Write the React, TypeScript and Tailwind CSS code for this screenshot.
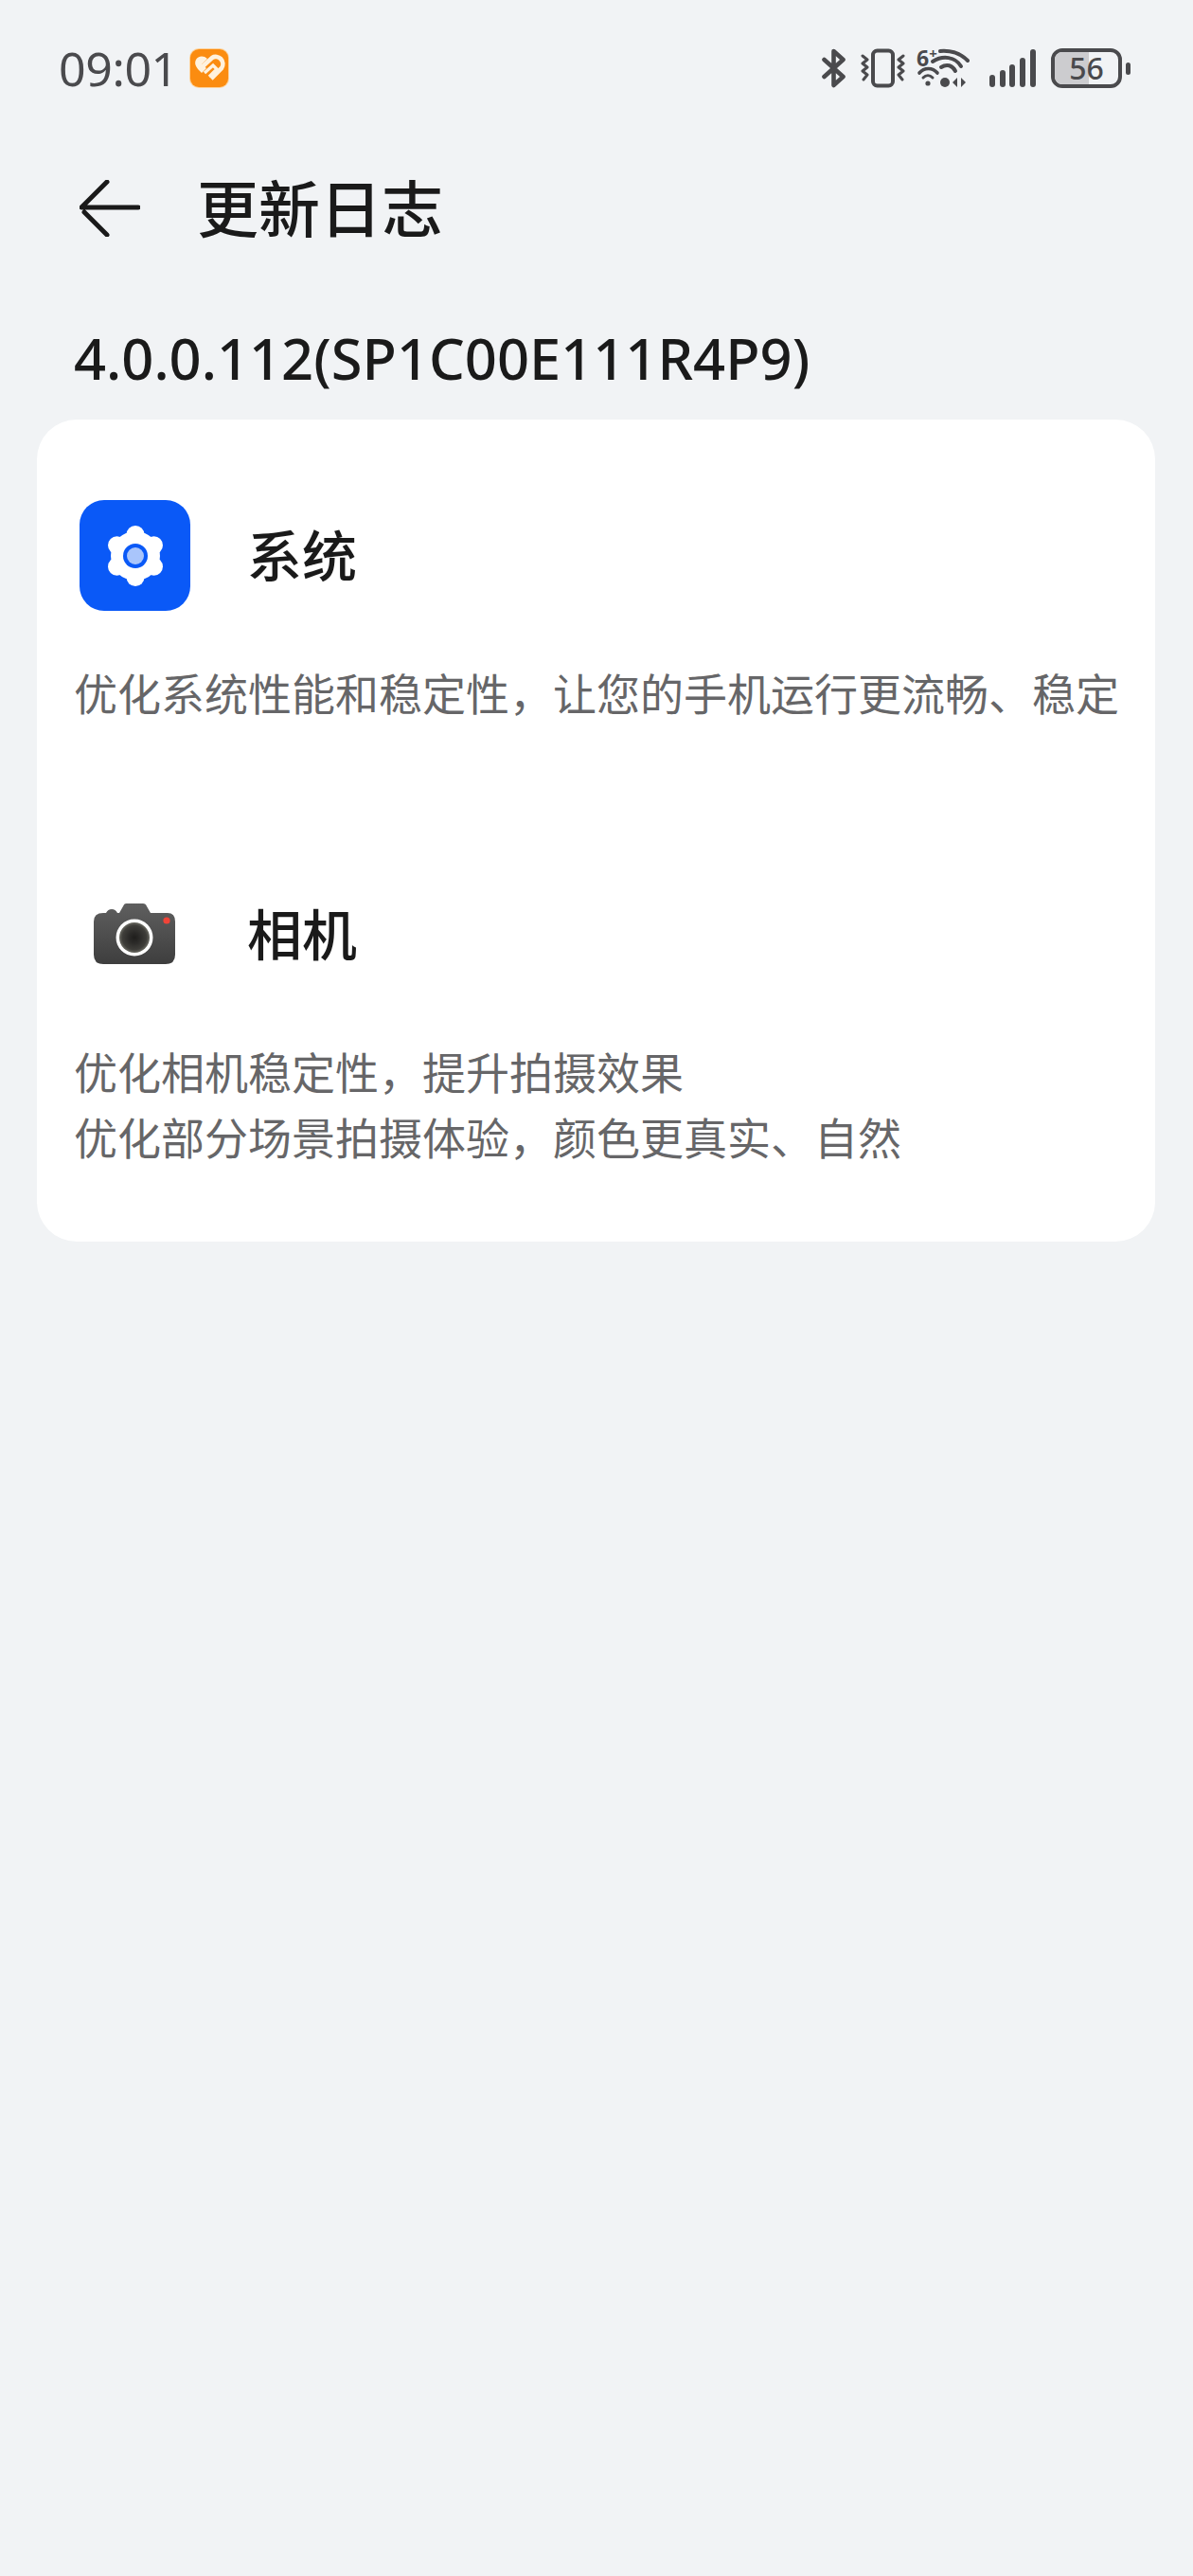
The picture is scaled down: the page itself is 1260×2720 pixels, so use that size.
import React from "react";

const font = { fontFamily: '"Noto Sans CJK SC", "Noto Sans", sans-serif' };

function Bluetooth() {
  return (
    <svg width="25" height="42" viewBox="0 0 25 42" fill="none" stroke="#4a4a4d" strokeWidth="4.6" strokeLinecap="round" strokeLinejoin="round">
      <path d="M2.5 12 L22.5 30 L12.5 39 V3 L22.5 12 L2.5 30" />
    </svg>
  );
}
function Vibrate() {
  return (
    <svg width="47" height="42" viewBox="0 0 47 42" fill="none" stroke="#4a4a4d" strokeLinecap="round" strokeLinejoin="round">
      <rect x="13" y="2.5" width="21" height="37" rx="4.5" strokeWidth="4" />
      <path d="M2 8 L7 12 L2 16 L7 20 L2 24 L7 28 L3 33" strokeWidth="3" />
      <path d="M45 8 L40 12 L45 16 L40 20 L45 24 L40 28 L44 33" strokeWidth="3" />
    </svg>
  );
}
function Wifi() {
  return (
    <svg width="56" height="42" viewBox="0 0 56 42" fill="none" stroke="#4a4a4d" strokeLinecap="round" className="overflow-visible">
      <text x="-1" y="19" fill="#4a4a4d" stroke="none" fontWeight="700" fontFamily="Noto Sans, sans-serif" fontSize="23">6<tspan fontSize="15" dy="-8">+</tspan></text>
      <path d="M24 3 C36 2 46 6 53 13" strokeWidth="4" />
      <path d="M16 14 C27 7 40 9 46 19" strokeWidth="4" />
      <path d="M25 20 C31 16 37 18 40 24" strokeWidth="4" />
      <path d="M2 26 C7 20 16 20 21 26" strokeWidth="3.6" />
      <circle cx="11" cy="37" r="2.6" fill="#4a4a4d" stroke="none" />
      <path d="M6 31 C9 28 13 28 16 31" strokeWidth="3" />
      <circle cx="29" cy="36" r="5" fill="#4a4a4d" stroke="none" />
      <path d="M37 36 L42 31 V41 Z M51 36 L46 31 V41 Z" fill="#4a4a4d" stroke="none" />
    </svg>
  );
}
function Signal() {
  return (
    <svg width="49" height="42" viewBox="0 0 49 42" fill="#4a4a4d">
      <rect x="0" y="28" width="6" height="13" rx="3" />
      <rect x="11" y="23" width="6" height="18" rx="3" />
      <rect x="21" y="17" width="6" height="24" rx="3" />
      <rect x="32" y="10" width="6" height="31" rx="3" />
      <rect x="43" y="1" width="6" height="40" rx="3" />
    </svg>
  );
}
function Battery() {
  return (
    <div className="flex items-center">
      <div className="relative flex h-[42px] w-[75px] items-center justify-center rounded-[12px] border-[4px] border-[#4a4a4d]">
        <div className="absolute inset-y-0 left-0 w-[36px] rounded-l-[8px] bg-[#cccccf]" />
        <span className="relative text-[32px] font-medium leading-[34px] text-[#4a4a4d]" style={{ fontFamily: '"Noto Sans", sans-serif' }}>56</span>
      </div>
      <div className="ml-[4px] h-[13px] w-[5px] rounded-full bg-[#4a4a4d]" />
    </div>
  );
}

function HealthIcon() {
  return (
    <div className="ml-[13px] flex h-[40px] w-[40px] items-center justify-center rounded-[9px] bg-[#fb8c10] ring-1 ring-[#fdd29b]">
      <svg width="34" height="30" viewBox="0 0 34 30" fill="none" stroke="#fff2de" strokeWidth="4.6">
        <path d="M8 15 L20 4 C23 2 27 3 29 5 C32 8 32 12 30 15 L19 26" />
        <path d="M12 20 L21 12 L25 16 L17 24" strokeWidth="3.4" />
        <path d="M15 5 C11 1 5 2 3 6 C1 10 3 13 5 16 L9 20 L14 15 L9 11 Z" fill="#fff2de" strokeWidth="0" />
      </svg>
    </div>
  );
}

function GearIcon() {
  const lobes = [0, 60, 120, 180, 240, 300];
  return (
    <div className="flex h-[117px] w-[117px] items-center justify-center rounded-[26px] bg-[#0a59f7]">
      <svg width="64" height="66" viewBox="-32 -33 64 66">
        <circle r="26" fill="#ffffff" />
        {lobes.map((a) => (
          <circle key={a} cx={22.5 * Math.sin((a * Math.PI) / 180)} cy={-22.5 * Math.cos((a * Math.PI) / 180)} r="9.5" fill="#ffffff" />
        ))}
        <circle r="13" fill="#0a59f7" />
        <circle r="9" fill="#a9c5fb" />
      </svg>
    </div>
  );
}

function CameraIcon() {
  return (
    <div className="flex h-[117px] w-[117px] items-center justify-center">
      <svg width="88" height="66" viewBox="0 0 88 66">
        <defs>
          <linearGradient id="body" x1="0" y1="0" x2="0" y2="1">
            <stop offset="0" stopColor="#5f5f5f" />
            <stop offset="1" stopColor="#3e3e3e" />
          </linearGradient>
          <radialGradient id="lens">
            <stop offset="0" stopColor="#1f1e1c" />
            <stop offset="0.35" stopColor="#2b2a28" />
            <stop offset="0.8" stopColor="#3f3e3a" />
            <stop offset="1" stopColor="#6a6a62" />
          </radialGradient>
        </defs>
        <path fill="url(#body)" d="M34 0 H52 Q55 0 56 3 L60 10 H78 Q86 10 86 19 V54 Q86 64 76 64 H10 Q0 64 0 54 V19 Q0 10 10 10 H13 Q15 6 19 6 Q23 6 25 10 H27 L31 3 Q32 0 34 0 Z" />
        <circle cx="43" cy="36" r="19.5" fill="#ffffff" />
        <circle cx="43" cy="36" r="16" fill="url(#lens)" />
        <circle cx="77" cy="18" r="3.6" fill="#f04438" />
      </svg>
    </div>
  );
}

function Section({ icon, title, lines }: { icon: React.ReactNode; title: string; lines: string[] }) {
  return (
    <div>
      <div className="flex items-center pl-[45px]">
        {icon}
        <h2 className="mb-[5px] ml-[60px] text-[58px] font-medium leading-[80px] text-[#1a1a1a]">{title}</h2>
      </div>
      <div className="mt-[51px] pl-[39px] text-[46px] leading-[69px] text-[#666668]">
        {lines.map((l) => (
          <p key={l} className="whitespace-nowrap">{l}</p>
        ))}
      </div>
    </div>
  );
}

export default function App() {
  return (
    <div className="h-[2720px] w-[1260px] overflow-hidden bg-[#f1f3f5]" style={font}>
      <div className="mt-[36px] flex h-[72px] items-center justify-between pl-[62px] pr-[66px]">
        <div className="flex items-center">
          <span className="text-[50px] leading-none tracking-[-0.4px] text-[#4a4a4d]" style={{ fontFamily: '"Noto Sans", sans-serif' }}>09:01</span>
          <HealthIcon />
        </div>
        <div className="flex items-center">
          <Bluetooth />
          <div className="ml-[16px]"><Vibrate /></div>
          <div className="ml-[13px]"><Wifi /></div>
          <div className="ml-[20px]"><Signal /></div>
          <div className="ml-[16px]"><Battery /></div>
        </div>
      </div>

      <div className="mt-[64px] flex h-[96px] items-center pl-[84px]">
        <svg width="64" height="60" viewBox="0 0 64 60" fill="none" stroke="#1a1a1a" strokeWidth="5" strokeLinecap="round" strokeLinejoin="round">
          <path d="M29 2 L2 29 H62 M5 34 L29 58" />
        </svg>
        <h1 className="mb-[5px] ml-[60px] text-[65px] font-medium leading-none text-[#1a1a1a]">更新日志</h1>
      </div>

      <div className="mt-[70px] pl-[78px] text-[59.6px] font-medium leading-[80px] text-[#1a1a1a]" style={{ fontFamily: '"Noto Sans", sans-serif' }}>
        4.0.0.112(SP1C00E111R4P9)
      </div>

      <div className="ml-[39px] mt-[25px] h-[868px] w-[1181px] rounded-[42px] bg-white pt-[85px]">
        <Section icon={<GearIcon />} title="系统" lines={["优化系统性能和稳定性，让您的手机运行更流畅、稳定"]} />
        <div className="mt-[163px]">
          <Section icon={<CameraIcon />} title="相机" lines={["优化相机稳定性，提升拍摄效果", "优化部分场景拍摄体验，颜色更真实、自然"]} />
        </div>
      </div>
    </div>
  );
}
